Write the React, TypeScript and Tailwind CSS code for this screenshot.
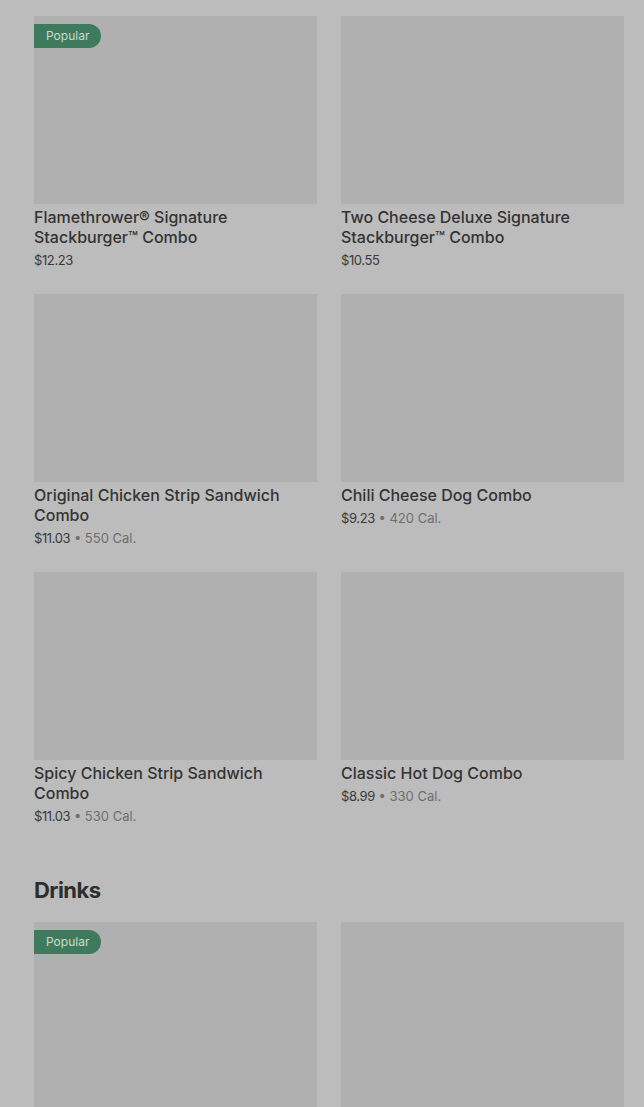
const combos = [
  { name: 'Flamethrower® Signature Stackburger™ Combo', price: '$12.23', popular: true },
  { name: 'Two Cheese Deluxe Signature Stackburger™ Combo', price: '$10.55' },
  { name: 'Original Chicken Strip Sandwich Combo', price: '$11.03', cal: '550 Cal.' },
  { name: 'Chili Cheese Dog Combo', price: '$9.23', cal: '420 Cal.' },
  { name: 'Spicy Chicken Strip Sandwich Combo', price: '$11.03', cal: '530 Cal.' },
  { name: 'Classic Hot Dog Combo', price: '$8.99', cal: '330 Cal.' },
];

const drinks = [
  { name: 'Fountain Drink', price: '$2.49', popular: true },
  { name: 'Bottled Water', price: '$2.19' },
];

type Item = { name: string; price: string; cal?: string; popular?: boolean };

function ItemCard({ item }: { item: Item }) {
  return (
    <div className="flex flex-col">
      <div className="relative h-[188px] bg-[#b0b0b0]">
        {item.popular && (
          <span className="absolute left-0 top-2 h-6 pl-3 pr-3 flex items-center rounded-r-full bg-[#3e7b5d] text-[12px] text-[#c9dccf]">
            Popular
          </span>
        )}
      </div>
      <h3 className="mt-[3px] text-[16px] leading-5 font-medium text-[#333333] pr-6">
        {item.name}
      </h3>
      <p className="mt-[3px] text-[13px] leading-5 tracking-[-0.03em] text-[#3a3a3a]">
        {item.price}
        {item.cal && <span className="text-[#6e6e6e] tracking-normal"> • {item.cal}</span>}
      </p>
    </div>
  );
}

export default function App() {
  return (
    <div className="min-h-screen bg-[#bcbcbc] pl-[34px] pr-[20px] pt-4 font-['Inter','Roboto',sans-serif]">
      <div className="grid grid-cols-2 gap-x-6 gap-y-6">
        {combos.map((item) => (
          <ItemCard key={item.name} item={item} />
        ))}
      </div>
      <h2 className="mt-[50px] mb-[18px] text-[22px] leading-7 font-bold tracking-tight text-[#2e2e2e]">
        Drinks
      </h2>
      <div className="grid grid-cols-2 gap-x-6 gap-y-6">
        {drinks.map((item) => (
          <ItemCard key={item.name} item={item} />
        ))}
      </div>
    </div>
  );
}
